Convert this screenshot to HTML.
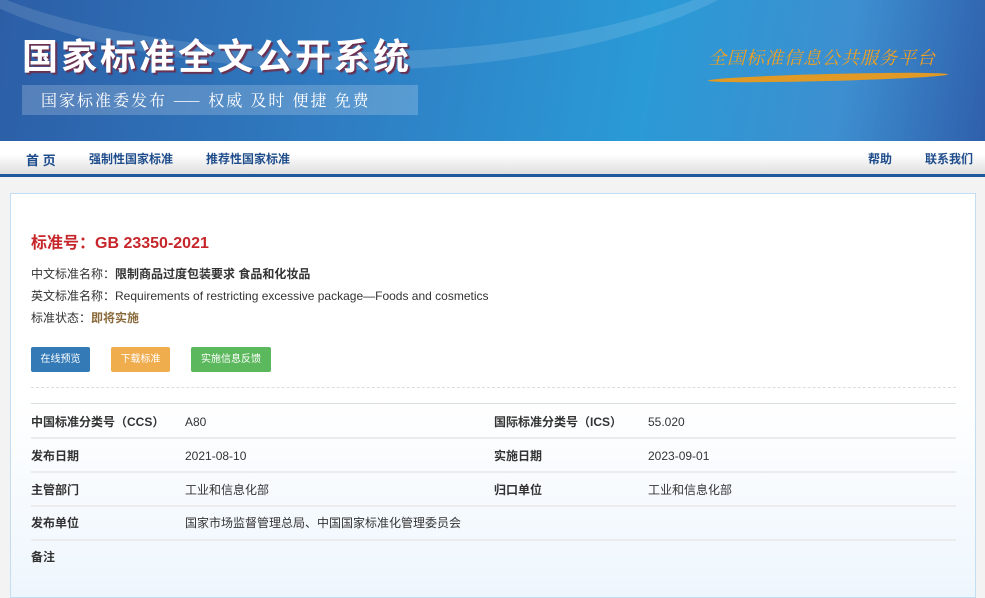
<!DOCTYPE html>
<html><head><meta charset="utf-8"><style>
*{margin:0;padding:0;box-sizing:border-box}
body{width:985px;height:594px;overflow:hidden;background:#f3f3f3;font-family:"Liberation Sans","Noto Sans CJK SC",sans-serif;position:relative}
.hd{position:absolute;left:0;top:0;width:985px;height:141px;background:linear-gradient(100deg,#2c5ea6 0%,#2f7cc2 35%,#2a9ad6 65%,#3d8fd0 85%,#2f5fab 100%);overflow:hidden}
.hd .sw{position:absolute;left:-100px;top:-260px;width:900px;height:330px;border-radius:50%;border-bottom:18px solid rgba(255,255,255,.12)}
.title{position:absolute;left:22px;top:28px;font-size:36px;font-weight:bold;color:#fff;letter-spacing:3px;text-shadow:2px 2px 1px #6a3050;font-family:"Noto Sans CJK SC",sans-serif}
.sub{position:absolute;left:22px;top:85px;width:396px;height:30px;background:rgba(255,255,255,.2);color:#fff;font-family:"Noto Serif CJK SC",serif;font-size:16px;line-height:30px;padding-left:19px;letter-spacing:2px}
.plat{position:absolute;left:708px;top:44px;color:#f0a020;font-size:18px;font-family:"Noto Serif CJK SC",serif;font-style:italic;letter-spacing:1px}
.plat:after{content:"";position:absolute;left:0;top:30px;width:240px;height:7px;background:#e09a25;border-radius:50%;transform:rotate(-1.5deg)}
.nav{position:absolute;left:0;top:141px;width:985px;height:36px;background:linear-gradient(#fff 40%,#dedede);border-bottom:3px solid #1d5a9c}
.nav span{position:absolute;top:9px;font-size:13px;font-weight:bold;color:#1f4d8c}
.card{position:absolute;left:10px;top:193px;width:966px;height:405px;border:1px solid #c3def2;background:linear-gradient(#fff 50%,#eef6fd)}
.c{position:absolute;font-size:12px;line-height:14px;color:#333;white-space:nowrap}
.c b{line-height:14px}
.h1{position:absolute;left:20px;top:35px;color:#c6262a;font-size:16px;font-weight:bold}
.btn{position:absolute;top:153px;height:25px;line-height:25px;color:#fff;font-size:10px;text-align:center;border-radius:2px}
.ln{position:absolute;left:20px;width:925px;height:2px;background:#ececec}
.k{font-weight:bold;color:#333}
</style></head><body>
<div class="hd"><div class="sw"></div>
<div class="title">国家标准全文公开系统</div>
<div class="sub">国家标准委发布 —— 权威 及时 便捷 免费</div>
<div class="plat">全国标准信息公共服务平台</div></div>
<div class="nav"><span style="left:26px">首 页</span><span style="left:89px;font-size:12px">强制性国家标准</span><span style="left:206px;font-size:12px">推荐性国家标准</span><span style="left:868px;font-size:12px">帮助</span><span style="left:925px;font-size:12px">联系我们</span></div>
<div class="card">
<div class="h1">标准号：GB 23350-2021</div>
<div class="c" style="left:20px;top:73px">中文标准名称：<b>限制商品过度包装要求 食品和化妆品</b></div>
<div class="c" style="left:20px;top:95px">英文标准名称：Requirements of restricting excessive package—Foods and cosmetics</div>
<div class="c" style="left:20px;top:117px">标准状态：<b style="color:#8a6a3a">即将实施</b></div>
<div class="btn" style="left:20px;width:59px;background:#337ab7">在线预览</div>
<div class="btn" style="left:100px;width:59px;background:#f0ad4e">下载标准</div>
<div class="btn" style="left:180px;width:80px;background:#5cb85c">实施信息反馈</div>
<div style="position:absolute;left:20px;top:193px;width:925px;border-top:1px dashed #ddd"></div>
<div class="ln" style="top:209px;height:1px;background:#ddd"></div>
<div class="c k" style="left:20px;top:221px">中国标准分类号（CCS）</div><div class="c" style="left:174px;top:221px">A80</div>
<div class="c k" style="left:483px;top:221px">国际标准分类号（ICS）</div><div class="c" style="left:637px;top:221px">55.020</div>
<div class="ln" style="top:243px"></div>
<div class="c k" style="left:20px;top:255px">发布日期</div><div class="c" style="left:174px;top:255px">2021-08-10</div>
<div class="c k" style="left:483px;top:255px">实施日期</div><div class="c" style="left:637px;top:255px">2023-09-01</div>
<div class="ln" style="top:277px"></div>
<div class="c k" style="left:20px;top:289px">主管部门</div><div class="c" style="left:174px;top:289px">工业和信息化部</div>
<div class="c k" style="left:483px;top:289px">归口单位</div><div class="c" style="left:637px;top:289px">工业和信息化部</div>
<div class="ln" style="top:311px"></div>
<div class="c k" style="left:20px;top:322px">发布单位</div><div class="c" style="left:174px;top:322px">国家市场监督管理总局、中国国家标准化管理委员会</div>
<div class="ln" style="top:345px"></div>
<div class="c k" style="left:20px;top:356px">备注</div>
</div>
</body></html>
